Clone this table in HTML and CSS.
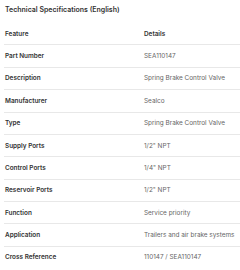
FILE: index.html
```html
<!DOCTYPE html>
<html lang="en">
    <head>
        <meta charset="UTF-8">
        <title>Technical Specifications</title>
        <link rel="stylesheet" href="styles.css">
    </head>
<body>

<div class="specs">
    <h3 class="specs-title">Technical Specifications (English)</h3>
    <table class="specs-table">
        <colgroup>
            <col class="col-feature">
            <col>
        </colgroup>
        <thead>
            <tr>
                <th>Feature</th>
                <th>Details</th>
            </tr>
        </thead>
        <tbody>
            <tr><td class="label">Part Number</td><td>SEA110147</td></tr>
            <tr><td class="label">Description</td><td>Spring Brake Control Valve</td></tr>
            <tr><td class="label">Manufacturer</td><td>Sealco</td></tr>
            <tr><td class="label">Type</td><td>Spring Brake Control Valve</td></tr>
            <tr><td class="label">Supply Ports</td><td>1/2" NPT</td></tr>
            <tr><td class="label">Control Ports</td><td>1/4" NPT</td></tr>
            <tr><td class="label">Reservoir Ports</td><td>1/2" NPT</td></tr>
            <tr><td class="label">Function</td><td>Service priority</td></tr>
            <tr><td class="label">Application</td><td>Trailers and air brake systems</td></tr>
            <tr><td class="label">Cross Reference</td><td>110147 / SEA110147</td></tr>
        </tbody>
    </table>
</div>

</body>
</html>
```

FILE: styles.css
```css
body {
    margin: 0;
    font-family: Inter, "Noto Sans", sans-serif;
    color: #333;
    background: #fff;
}
.specs {
    padding-left: 4px;
}
.specs-title {
    font-size: 7px;
    font-weight: 600;
    line-height: 8px;
    margin: 0;
    padding: 6px 1px 9px;
    color: #333;
}
.specs-table {
    width: 100%;
    table-layout: fixed;
    border-collapse: collapse;
    font-size: 6.4px;
    line-height: 8px;
}
.col-feature {
    width: 139px;
}
.specs-table th,
.specs-table td {
    text-align: left;
    padding: 6.7px 1px;
    border-bottom: 1px solid #e8e8e8;
    white-space: nowrap;
}
.specs-table th {
    font-weight: 600;
    color: #333;
}
.specs-table td {
    color: #666;
}
.specs-table td.label {
    font-weight: 600;
    color: #333;
}
.specs-table tr:last-child td {
    border-bottom: none;
}
```
